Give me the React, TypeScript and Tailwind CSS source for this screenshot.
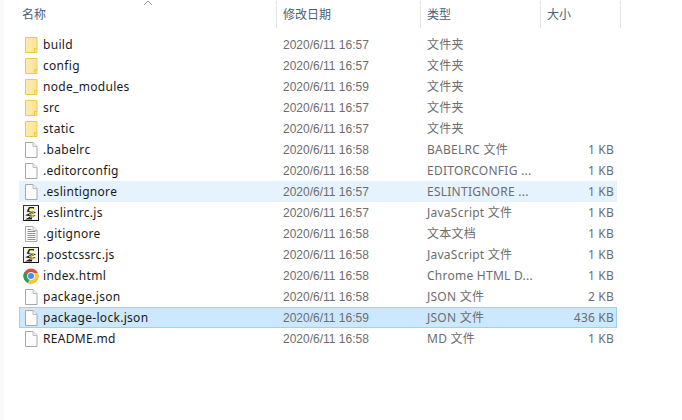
import React from 'react';

type Row = { name: string; date: string; type: string; size?: string; icon: 'folder' | 'file' | 'js' | 'text' | 'chrome'; state?: 'hover' | 'selected' };

const rows: Row[] = [
  { name: 'build', date: '2020/6/11 16:57', type: '文件夹', icon: 'folder' },
  { name: 'config', date: '2020/6/11 16:57', type: '文件夹', icon: 'folder' },
  { name: 'node_modules', date: '2020/6/11 16:59', type: '文件夹', icon: 'folder' },
  { name: 'src', date: '2020/6/11 16:57', type: '文件夹', icon: 'folder' },
  { name: 'static', date: '2020/6/11 16:57', type: '文件夹', icon: 'folder' },
  { name: '.babelrc', date: '2020/6/11 16:58', type: 'BABELRC 文件', size: '1 KB', icon: 'file' },
  { name: '.editorconfig', date: '2020/6/11 16:58', type: 'EDITORCONFIG ...', size: '1 KB', icon: 'file' },
  { name: '.eslintignore', date: '2020/6/11 16:57', type: 'ESLINTIGNORE ...', size: '1 KB', icon: 'file', state: 'hover' },
  { name: '.eslintrc.js', date: '2020/6/11 16:57', type: 'JavaScript 文件', size: '1 KB', icon: 'js' },
  { name: '.gitignore', date: '2020/6/11 16:58', type: '文本文档', size: '1 KB', icon: 'text' },
  { name: '.postcssrc.js', date: '2020/6/11 16:58', type: 'JavaScript 文件', size: '1 KB', icon: 'js' },
  { name: 'index.html', date: '2020/6/11 16:58', type: 'Chrome HTML D...', size: '1 KB', icon: 'chrome' },
  { name: 'package.json', date: '2020/6/11 16:58', type: 'JSON 文件', size: '2 KB', icon: 'file' },
  { name: 'package-lock.json', date: '2020/6/11 16:59', type: 'JSON 文件', size: '436 KB', icon: 'file', state: 'selected' },
  { name: 'README.md', date: '2020/6/11 16:58', type: 'MD 文件', size: '1 KB', icon: 'file' },
];

const FileIcon = ({ kind }: { kind: Row['icon'] }) => {
  if (kind === 'folder') {
    return (
      <svg width="16" height="16" viewBox="0 0 16 16">
        <path d="M2.5 0.5h11.5v15H2.5z" fill="#fde59a" stroke="#ecc94f" />
        <path d="M3 1h6v14H3z" fill="#fee9ab" />
        <path d="M11.5 15.500v-4h2.500" fill="#f9dc7e" stroke="#ecc94f" />
      </svg>
    );
  }
  if (kind === 'chrome') {
    return (
      <svg width="16" height="16" viewBox="0 0 16 16">
        <circle cx="8" cy="8" r="7.5" fill="#dd4b39" />
        <path d="M8 8 1.600 3.900A7.500 7.500 0 0 0 8 15.500z" fill="#2f9e52" />
        <path d="M8 8 5 15a7.500 7.500 0 0 0 9.800-10H8z" fill="#fbc82e" />
        <circle cx="8" cy="8" r="3.900" fill="#f4f6fa" />
        <circle cx="8" cy="8" r="3" fill="#4a8af0" />
      </svg>
    );
  }
  if (kind === 'js') {
    return (
      <svg width="16" height="16" viewBox="0 0 16 16">
        <rect x="0.5" y="0.5" width="15" height="15" fill="#f2f2f2" stroke="#333" />
        <path d="M1 15.500h14.500V1" fill="none" stroke="#111" />
        <path d="M11 3H6.500L5 6l5.500 1.500L5 10l5 1-4.500 2.500H9" fill="none" stroke="#20201c" strokeWidth="1.8" />
        <path d="M10.500 3.500H7L6.200 5.800l4.600 1.600-4.600 2.300 4.500 1.200-3.500 1.800" fill="none" stroke="#e8d92e" strokeWidth="0.9" />
      </svg>
    );
  }
  return (
    <svg width="16" height="16" viewBox="0 0 16 16">
      <path d="M2.500 0.500h7.500l4 4v11h-11.500z" fill="#fdfdfd" stroke="#a8a8a8" />
      <path d="M10 0.500v4h4" fill="#f2f2f2" stroke="#bcbcbc" />
      {kind === 'text' && <path d="M4.500 3.500h4M4.500 5.500h8M4.500 7.500h8M4.500 9.500h8M4.500 11.500h8M4.500 13.500h8" stroke="#8f8f8f" />}
    </svg>
  );
};

const Header = ({ label, className }: { label: string; className: string }) => (
  <div className={`flex items-center h-[27px] border-r border-[#e5e5e5] ${className}`}>{label}</div>
);

const App = () => (
  <div className="relative w-[682px] h-[420px] overflow-hidden bg-white text-[12px] font-['Noto_Sans','Noto_Sans_CJK_SC',sans-serif] border-l-4 border-[#fafafa]">
    <div className="absolute -left-1 top-[200px] w-[3px] h-[25px] bg-[#eeeeee]" />
    <svg className="absolute left-[139px] top-0" width="10" height="6" viewBox="0 0 10 6">
      <path d="M1 5 5 1l4 4" fill="none" stroke="#9a9a9a" />
    </svg>
    <div className="flex pt-px text-[#4c607a]">
      <Header label="名称" className="w-[273px] pl-[18px]" />
      <Header label="修改日期" className="w-[144px] pl-[6px]" />
      <Header label="类型" className="w-[120px] pl-[6px]" />
      <Header label="大小" className="w-[80px] pl-[6px]" />
    </div>
    <div className="mt-[6px] flex flex-col">
      {rows.map((row) => (
        <div
          key={row.name}
          className={`flex items-center h-[21px] w-[598px] ml-[15px] border ${
            row.state === 'selected'
              ? 'bg-[#cce8ff] border-[#99d1ff]'
              : row.state === 'hover'
                ? 'bg-[#e5f3ff] border-[#e5f3ff]'
                : 'border-transparent'
          }`}
        >
          <span className="ml-[3px] w-[20px] shrink-0 flex">
            <FileIcon kind={row.icon} />
          </span>
          <span className="w-[240px] shrink-0 text-[#1a1a1a] leading-[19px] tracking-[0.3px]">{row.name}</span>
          <span className="w-[144px] shrink-0 text-[#6d6d6d] leading-[19px] pt-px font-['Liberation_Sans','Noto_Sans_CJK_SC',sans-serif]">{row.date}</span>
          <span className="w-[120px] shrink-0 text-[#6d6d6d] leading-[19px] tracking-[0.25px]">{row.type}</span>
          <span className="w-[67px] shrink-0 text-right text-[#6d6d6d] leading-[19px] tracking-[0.2px]">{row.size}</span>
        </div>
      ))}
    </div>
  </div>
);

export default App;
